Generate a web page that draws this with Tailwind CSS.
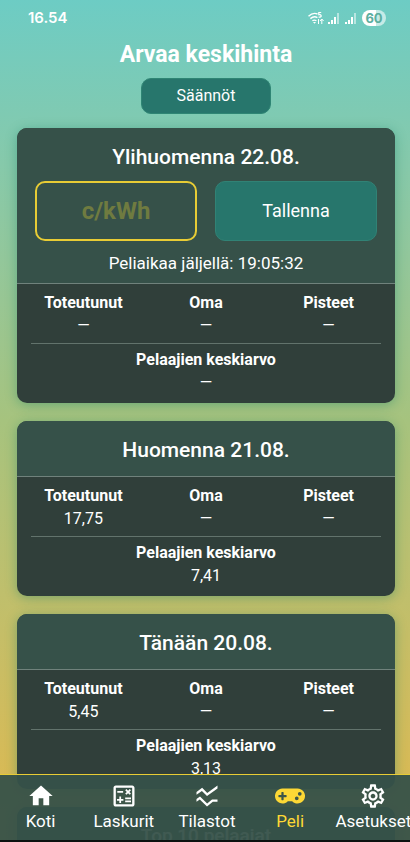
<!DOCTYPE html>
<html lang="fi">
<head>
<meta charset="utf-8">
<meta name="viewport" content="width=device-width, initial-scale=1">
<title>Arvaa keskihinta</title>
<script src="https://cdn.jsdelivr.net/npm/@tailwindcss/browser@4"></script>
</head>
<body class="font-[Roboto,sans-serif] text-white">
<div class="relative flex h-screen flex-col overflow-hidden bg-linear-to-b from-[#6dccc4] via-[#a6c37e] via-50% to-[#e0b84c]">

  <header class="flex h-9 shrink-0 items-center justify-between pr-6 pl-7">
    <time class="font-[Inter,sans-serif] text-[15px] font-semibold">16.54</time>
    <div class="flex items-center gap-[6px]">
      <svg class="h-4 w-[18px]" viewBox="0 0 18 16" fill="none" stroke="#fff" stroke-width="1.4" aria-hidden="true">
        <path d="M1.5 6.2Q6 2 10.5 4M3.4 8.6Q7 5.6 10.4 7.6M5.4 10.8Q7.4 9.4 9.4 10.8" />
        <path d="M6 12h3l-1.5 1.8z" fill="#fff" stroke="none" />
        <path d="M14.2 2.5h-2.4v2.2q2.4-.3 2.4 1.2 0 1.3-2.6 1.2" stroke-width="1.2" />
        <path d="M14.8 14V9m-1.8 2 1.8-2 1.8 2M11.500 9v5" stroke-width="1" />
      </svg>
      <svg class="-ml-[3px] h-3 w-[11px]" viewBox="0 0 11 12" fill="#fff" aria-hidden="true"><path d="M0 10h2v2H0zM3 8h2v4H3zM6 5h2v7H6z" /><path d="M9 1h2v11H9z" fill-opacity=".5" /></svg>
      <svg class="h-3 w-[11px]" viewBox="0 0 11 12" fill="#fff" aria-hidden="true"><path d="M0 10h2v2H0zM3 8h2v4H3zM6 5h2v7H6z" /><path d="M9 1h2v11H9z" fill-opacity=".5" /></svg>
      <span class="h-4 w-6 rounded-full bg-linear-to-r from-white from-60% to-white/60 to-60% text-center font-[Inter,sans-serif] text-[13px] leading-4 font-bold text-[#5cae9f]">60</span>
    </div>
  </header>

  <main class="min-h-0 flex-1 overflow-y-auto px-[17px] pr-[15px] pb-20 [scrollbar-width:none]">
    <div class="flex flex-col items-center">
      <h1 class="mt-[3px] text-[23px] leading-8 font-bold">Arvaa keskihinta</h1>
      <button type="button" class="mt-[7px] h-9 w-[130px] rounded-[10px] border border-[#2f8574] bg-[#27766c] text-base">Säännöt</button>
    </div>

    <div class="mt-[14px] flex flex-col gap-[18px]">
      <section class="overflow-hidden rounded-[10px] bg-[#303f3a] shadow-[0_2px_12px_0_rgba(20,125,100,0.4)]">
        <form class="border-b border-[#70827c] bg-[#365149] px-[18px] pt-[15px] pb-2 text-center">
          <h2 class="text-[21px] leading-7 font-medium">Ylihuomenna 22.08.</h2>
          <div class="mt-[10px] grid grid-cols-2 gap-[18px]">
            <input type="text" inputmode="decimal" aria-label="Hinta-arvaus, c/kWh" placeholder="c/kWh" class="h-[60px] w-full min-w-0 rounded-[10px] border-2 border-[#e8cc35] bg-transparent text-center text-2xl font-bold text-[#fdd835] placeholder:text-[#6f7b40]">
            <button type="button" class="h-[60px] rounded-[10px] border border-[#318275] bg-[#27766c] text-lg">Tallenna</button>
          </div>
          <p class="mt-[10px] text-[17px] leading-6">Peliaikaa jäljellä: 19:05:32</p>
        </form>
        <div class="px-[14px] pt-[7px] pb-[9px] text-center text-base leading-[23px]">
          <dl class="grid grid-cols-[1fr_1.34fr_1fr] border-b border-[#62736c] pb-[6px]">
            <div><dt class="font-bold">Toteutunut</dt><dd>—</dd></div>
            <div><dt class="font-bold">Oma</dt><dd>—</dd></div>
            <div><dt class="font-bold">Pisteet</dt><dd>—</dd></div>
          </dl>
          <dl class="pt-1"><dt class="font-bold">Pelaajien keskiarvo</dt><dd>—</dd></dl>
        </div>
      </section>

      <section class="overflow-hidden rounded-[10px] bg-[#303f3a] shadow-[0_2px_12px_0_rgba(20,125,100,0.4)]">
        <h2 class="border-b border-[#70827c] bg-[#365149] pt-[15px] pb-3 text-center text-[21px] leading-7 font-medium">Huomenna 21.08.</h2>
        <div class="px-[14px] pt-[7px] pb-[9px] text-center text-base leading-[23px]">
          <dl class="grid grid-cols-[1fr_1.34fr_1fr] border-b border-[#62736c] pb-[6px]">
            <div><dt class="font-bold">Toteutunut</dt><dd>17,75</dd></div>
            <div><dt class="font-bold">Oma</dt><dd>—</dd></div>
            <div><dt class="font-bold">Pisteet</dt><dd>—</dd></div>
          </dl>
          <dl class="pt-1"><dt class="font-bold">Pelaajien keskiarvo</dt><dd>7,41</dd></dl>
        </div>
      </section>

      <section class="overflow-hidden rounded-[10px] bg-[#303f3a] shadow-[0_2px_12px_0_rgba(20,125,100,0.4)]">
        <h2 class="border-b border-[#70827c] bg-[#365149] pt-[15px] pb-3 text-center text-[21px] leading-7 font-medium">Tänään 20.08.</h2>
        <div class="px-[14px] pt-[7px] pb-[9px] text-center text-base leading-[23px]">
          <dl class="grid grid-cols-[1fr_1.34fr_1fr] border-b border-[#62736c] pb-[6px]">
            <div><dt class="font-bold">Toteutunut</dt><dd>5,45</dd></div>
            <div><dt class="font-bold">Oma</dt><dd>—</dd></div>
            <div><dt class="font-bold">Pisteet</dt><dd>—</dd></div>
          </dl>
          <dl class="pt-1"><dt class="font-bold">Pelaajien keskiarvo</dt><dd>3,13</dd></dl>
        </div>
      </section>

      <section class="overflow-hidden rounded-[10px] bg-[#303f3a] shadow-[0_2px_12px_0_rgba(20,125,100,0.4)]">
        <h2 class="bg-[#365149] pt-[15px] pb-3 text-center text-[19px] leading-7 font-medium">Top 10 pelaajat</h2>
      </section>
    </div>
  </main>

  <nav class="absolute inset-x-0 bottom-0 overflow-hidden border-t border-b-2 border-t-[#e8cc35] border-b-[#0c1210] bg-[#365149]/95 pt-[7px] pb-2">
    <div class="-ml-px grid w-[calc(100%+6px)] grid-cols-5 text-[17px] leading-[22px]">
      <a href="#koti" class="flex flex-col items-center">
        <svg class="size-7" viewBox="0 0 24 24" fill="currentColor" aria-hidden="true"><path d="M10 20v-6h4v6h5v-8h3L12 3 2 12h3v8z" /></svg>
        <span>Koti</span>
      </a>
      <a href="#laskurit" class="flex flex-col items-center">
        <svg class="size-7" viewBox="0 0 24 24" fill="currentColor" aria-hidden="true"><path d="M19 3H5c-1.100 0-2 .9-2 2v14c0 1.100.9 2 2 2h14c1.100 0 2-.9 2-2V5c0-1.100-.9-2-2-2zm0 16H5V5h14v14z" /><path d="M6.250 7.720h5v1.500h-5zM13 15.750h5v1.500h-5zM13 13.250h5v1.500h-5zM8 18h1.500v-2h2v-1.500h-2v-2H8v2H6V16h2zM14.090 10.950l1.410-1.410 1.410 1.410 1.060-1.060-1.410-1.420 1.410-1.410L16.910 6 15.500 7.410 14.090 6l-1.060 1.060 1.410 1.410-1.410 1.420z" /></svg>
        <span>Laskurit</span>
      </a>
      <a href="#tilastot" class="flex flex-col items-center">
        <svg class="size-7" viewBox="0 0 24 24" fill="currentColor" aria-hidden="true"><path d="M21 5.470 12 12 7.620 7.620 3 11V8.520L7.830 5l4.380 4.380L21 3v2.470zM21 15h-4.700l-4.170 3.340L6 12.410l-3 2.130V17l2.800-2 6.200 6 5-4h4v-2z" /></svg>
        <span>Tilastot</span>
      </a>
      <a href="#peli" aria-current="page" class="flex flex-col items-center text-[#fdd835]">
        <svg class="h-7 w-[30px]" viewBox="0 0 640 512" fill="currentColor" aria-hidden="true"><path d="M480.070 96H160a160 160 0 1 0 114.240 272h91.500A160 160 0 1 0 480.070 96zM248 268a12 12 0 0 1-12 12h-52v52a12 12 0 0 1-12 12h-24a12 12 0 0 1-12-12v-52H84a12 12 0 0 1-12-12v-24a12 12 0 0 1 12-12h52v-52a12 12 0 0 1 12-12h24a12 12 0 0 1 12 12v52h52a12 12 0 0 1 12 12zm216 76a40 40 0 1 1 40-40 40 40 0 0 1-40 40zm64-96a40 40 0 1 1 40-40 40 40 0 0 1-40 40z" /></svg>
        <span>Peli</span>
      </a>
      <a href="#asetukset" class="flex flex-col items-center">
        <svg class="size-7" viewBox="0 0 24 24" fill="currentColor" aria-hidden="true"><path d="M19.43 12.98c.04-.32.07-.64.07-.98s-.03-.66-.07-.98l2.11-1.65c.19-.15.24-.42.12-.64l-2-3.46c-.09-.16-.26-.25-.44-.25-.06 0-.12.01-.17.03l-2.49 1c-.52-.4-1.08-.73-1.69-.98l-.38-2.65C14.46 2.18 14.25 2 14 2h-4c-.25 0-.46.18-.49.42l-.38 2.65c-.61.25-1.17.59-1.69.98l-2.49-1c-.06-.02-.12-.03-.18-.03-.17 0-.34.09-.43.25l-2 3.46c-.13.22-.07.49.12.64l2.11 1.65c-.04.32-.07.65-.07.98s.03.66.07.98l-2.11 1.65c-.19.15-.24.42-.12.64l2 3.46c.09.16.26.25.44.25.06 0 .12-.01.17-.03l2.49-1c.52.4 1.08.73 1.69.98l.38 2.65c.03.24.24.42.49.42h4c.25 0 .46-.18.49-.42l.38-2.65c.61-.25 1.17-.59 1.69-.98l2.49 1c.06.02.12.03.18.03.17 0 .34-.09.43-.25l2-3.46c.12-.22.07-.49-.12-.64l-2.11-1.65zm-1.98-1.71c.04.31.05.52.05.73 0 .21-.02.43-.05.73l-.14 1.13.89.7 1.08.84-.7 1.21-1.27-.51-1.04-.42-.9.68c-.43.32-.84.56-1.25.73l-1.06.43-.16 1.13-.2 1.35h-1.4l-.19-1.35-.16-1.13-1.06-.43c-.43-.18-.83-.41-1.23-.71l-.91-.7-1.06.43-1.27.51-.7-1.21 1.08-.84.89-.7-.14-1.13c-.03-.31-.05-.54-.05-.74s.02-.43.05-.73l.14-1.13-.89-.7-1.08-.84.7-1.21 1.27.51 1.04.42.9-.68c.43-.32.84-.56 1.25-.73l1.06-.43.16-1.13.2-1.35h1.39l.19 1.35.16 1.13 1.06.43c.43.18.83.41 1.23.71l.91.7 1.06-.43 1.27-.51.7 1.21-1.07.85-.89.7.14 1.13zM12 8c-2.210 0-4 1.790-4 4s1.790 4 4 4 4-1.790 4-4-1.790-4-4-4zm0 6c-1.100 0-2-.9-2-2s.9-2 2-2 2 .9 2 2-.9 2-2 2z" /></svg>
        <span>Asetukset</span>
      </a>
    </div>
  </nav>
</div>
</body>
</html>
